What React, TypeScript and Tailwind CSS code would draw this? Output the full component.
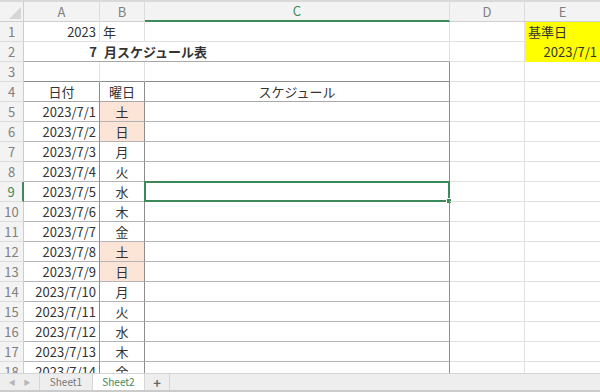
import type { ReactNode } from 'react';

const days = ['土', '日', '月', '火', '水', '木', '金', '土', '日', '月', '火', '水', '木', '金'];

type CellProps = {
  children?: ReactNode;
  className?: string;
};

// plain grid cell with excel-ish light gridlines
function Cell({ children, className = '' }: CellProps) {
  return (
    <div
      className={`relative h-[20px] flex items-center px-[3px] whitespace-nowrap border-r border-b border-[#e2e2e2] text-[13px] text-[#333] ${className}`}
    >
      {children}
    </div>
  );
}

function RowHead({ n, active }: { n: number; active?: boolean }) {
  return (
    <div
      className={`h-[20px] flex items-center justify-center bg-[#f3f3f3] border-b border-[#dcdcdc] text-[13px] ${
        active ? 'border-r-2 border-r-[#3c8a5a] text-[#3c8a5a]' : 'border-r border-r-[#cdcdcd] text-[#808080]'
      }`}
    >
      {n}
    </div>
  );
}

function ColHead({ label, active, last }: { label: string; active?: boolean; last?: boolean }) {
  return (
    <div
      className={`h-[22px] flex items-center justify-center bg-[#f3f3f3] border-t-2 border-t-[#d9d9d9] text-[13px] ${
        last ? '' : 'border-r border-r-[#dcdcdc]'
      } ${active ? 'border-b-2 border-b-[#3c8a5a] text-[#3c8a5a]' : 'border-b border-b-[#cfcfcf] text-[#808080]'}`}
    >
      {label}
    </div>
  );
}

export default function App() {
  const rows = days.map((d, i) => ({
    date: `2023/7/${i + 1}`,
    day: d,
    weekend: d === '土' || d === '日',
  }));

  return (
    <div className="w-[600px] h-[392px] flex flex-col overflow-hidden bg-white font-['Noto_Sans_CJK_JP','Noto_Sans',sans-serif]">
      <div className="flex-1 min-h-0 overflow-hidden">
        <div className="grid grid-cols-[24px_76px_45px_305px_75px_75px]">
          {/* header row */}
          <div className="relative h-[22px] bg-[#f3f3f3] border-t-2 border-t-[#d9d9d9] border-r border-r-[#cdcdcd] border-b border-b-[#cfcfcf]">
            <svg className="absolute right-[2px] bottom-[2px]" width="12" height="12" viewBox="0 0 12 12">
              <polygon points="12,0 12,12 0,12" fill="#d6d6d6" />
            </svg>
          </div>
          <ColHead label="A" />
          <ColHead label="B" />
          <ColHead label="C" active />
          <ColHead label="D" />
          <ColHead label="E" last />

          {/* row 1 */}
          <RowHead n={1} />
          <Cell className="justify-end">2023</Cell>
          <Cell>年</Cell>
          <Cell />
          <Cell />
          <Cell className="bg-[#ffff00] border-r-0 border-b-[#ffff00]">基準日</Cell>

          {/* row 2 */}
          <RowHead n={2} />
          <Cell className="justify-end font-bold text-[#111] border-r-0 border-b-[#a8a8a8]">7</Cell>
          <Cell className="font-bold text-[#111] overflow-visible z-10 border-r-0 border-b-[#a8a8a8] pl-[4px]">
            月スケジュール表
          </Cell>
          <Cell className="border-b-[#a8a8a8]" />
          <Cell />
          <Cell className="justify-end bg-[#ffff00] border-r-0 border-b-[#ffff00]">2023/7/1</Cell>

          {/* row 3 */}
          <RowHead n={3} />
          <Cell className="border-b-[#8c8c8c]" />
          <Cell className="border-b-[#8c8c8c]" />
          <Cell className="border-b-[#8c8c8c] border-r-[#8c8c8c]" />
          <Cell />
          <Cell className="border-r-0" />

          {/* row 4: table head */}
          <RowHead n={4} />
          <Cell className="justify-center border-b-[#a8a8a8] border-r-[#8c8c8c]">日付</Cell>
          <Cell className="justify-center border-b-[#a8a8a8] border-r-[#8c8c8c]">曜日</Cell>
          <Cell className="justify-center border-b-[#a8a8a8] border-r-[#8c8c8c]">スケジュール</Cell>
          <Cell />
          <Cell className="border-r-0" />

          {rows.map((r, i) => {
            const n = i + 5;
            const sel = n === 9;
            return [
              <RowHead key={`h${n}`} n={n} active={sel} />,
              <Cell key={`a${n}`} className="justify-end border-b-[#b4b4b4] border-r-[#8c8c8c]">
                {r.date}
              </Cell>,
              <Cell
                key={`b${n}`}
                className={`justify-center border-b-[#b4b4b4] border-r-[#8c8c8c] ${r.weekend ? 'bg-[#fce4d6]' : ''}`}
              >
                {r.day}
              </Cell>,
              <Cell key={`c${n}`} className="border-b-[#b4b4b4] border-r-[#8c8c8c]">
                {sel && (
                  <div className="absolute -left-px -top-px -right-px -bottom-px border-2 border-[#3c8a5a]">
                    <div className="absolute -right-[4px] -bottom-[4px] w-[6px] h-[6px] bg-[#3c8a5a] border border-white" />
                  </div>
                )}
              </Cell>,
              <Cell key={`d${n}`} />,
              <Cell key={`e${n}`} className="border-r-0" />,
            ];
          })}
        </div>
      </div>

      {/* sheet tabs */}
      <div className="h-[19px] shrink-0 flex items-stretch leading-none bg-[#eeeeee] border-t border-[#d4d4d4] border-b-2 border-b-[#cbcbcb] text-[10px] text-[#777]">
        <div className="w-[40px] flex items-center justify-center gap-[8px] text-[7px] text-[#b8b8b8] border-r border-[#d6d6d6]">
          <span>◀</span>
          <span>▶</span>
        </div>
        <div className="w-[53px] flex items-center justify-center border-r border-[#d6d6d6]">Sheet1</div>
        <div className="w-[52px] flex items-center justify-center bg-white text-[#3c8a5a] border-r border-[#d6d6d6]">Sheet2</div>
        <div className="w-[25px] flex items-center justify-center text-[13px] font-bold text-[#666] border-r border-[#d6d6d6]">+</div>
      </div>
    </div>
  );
}
